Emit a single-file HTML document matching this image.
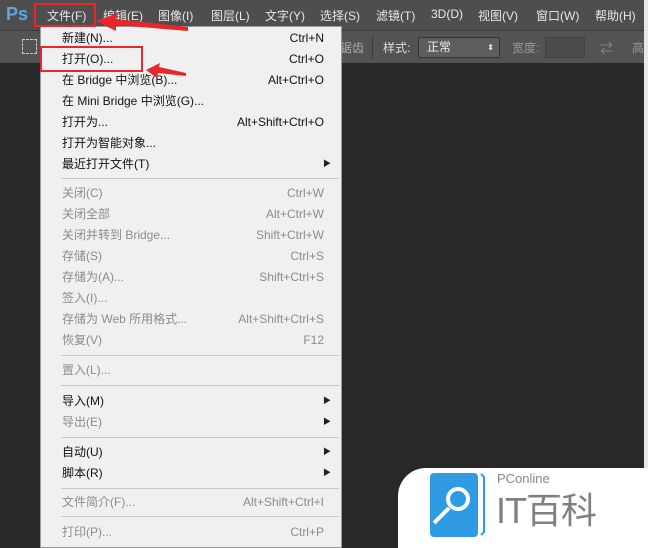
<!DOCTYPE html><html><head><meta charset="utf-8"><style>
body{margin:0;width:648px;height:541px;overflow:hidden;background:#282828;font-family:"Liberation Sans","Noto Sans CJK SC",sans-serif;position:relative}
.mb{position:absolute;left:0;top:0;width:648px;height:30px;background:#4e4e4e}
.mb span{position:absolute;top:7px;font-size:12px;color:#e8e8e8}
.tb{position:absolute;left:0;top:30px;width:648px;height:32px;background:#535353;border-top:1px solid #3a3a3a}
.menu{position:absolute;left:40px;top:26px;width:300px;height:520px;background:#f0f0f0;border:1px solid #999}
.it{position:absolute;left:21px;width:262px;font-size:12px;color:#111;height:21px;line-height:21px}
.it b{font-weight:normal;position:absolute;right:0;top:0}
.d{color:#8c8c8c}
.sep{position:absolute;left:20px;width:278px;height:1px;background:#c8c8c8}
.ar{position:absolute;right:10px;font-size:8px;color:#222}
.red{position:absolute;border:2px solid #e8262b}
</style></head><body>
<div class="mb">
<span style="left:6px;top:4px;font-size:18px;font-weight:bold;color:#5aa7e6">Ps</span>
<span style="left:47px">文件(F)</span><span style="left:103px">编辑(E)</span><span style="left:158px">图像(I)</span><span style="left:211px">图层(L)</span><span style="left:265px">文字(Y)</span><span style="left:320px">选择(S)</span><span style="left:376px">滤镜(T)</span><span style="left:431px">3D(D)</span><span style="left:478px">视图(V)</span><span style="left:536px">窗口(W)</span><span style="left:595px">帮助(H)</span>
</div>
<div class="tb">
<div style="position:absolute;left:22px;top:8px;width:13px;height:13px;border:1px dashed #ccc"></div>
<span style="position:absolute;left:340px;top:8px;font-size:12px;color:#aaa">锯齿</span>
<div style="position:absolute;left:372px;top:4px;width:1px;height:24px;background:#3e3e3e"></div>
<span style="position:absolute;left:383px;top:8px;font-size:12px;color:#ddd">样式:</span>
<div style="position:absolute;left:418px;top:6px;width:80px;height:19px;background:#5e5e5e;border:1px solid #333;border-radius:2px;color:#eee;font-size:12px;line-height:19px;text-indent:8px">正常<span style="position:absolute;right:5px;font-size:8px">⬍</span></div>
<span style="position:absolute;left:512px;top:8px;font-size:12px;color:#999">宽度:</span>
<div style="position:absolute;left:545px;top:6px;width:38px;height:19px;background:#4a4a4a;border:1px solid #444"></div>
<span style="position:absolute;left:600px;top:7px;font-size:13px;color:#888">⇄</span>
<span style="position:absolute;left:632px;top:8px;font-size:12px;color:#999">高</span>
</div>
<div style="position:absolute;left:644px;top:0;width:4px;height:541px;background:#e8e8e8"></div>
<div class="menu">
<div class="it" style="top:1px">新建(N)...<b>Ctrl+N</b></div>
<div class="it" style="top:22px">打开(O)...<b>Ctrl+O</b></div>
<div class="it" style="top:43px">在 Bridge 中浏览(B)...<b>Alt+Ctrl+O</b></div>
<div class="it" style="top:64px">在 Mini Bridge 中浏览(G)...</div>
<div class="it" style="top:85px">打开为...<b>Alt+Shift+Ctrl+O</b></div>
<div class="it" style="top:106px">打开为智能对象...</div>
<div class="it" style="top:127px">最近打开文件(T)</div><span class="ar" style="top:131px">▶</span>
<div class="sep" style="top:151px"></div>
<div class="it d" style="top:156px">关闭(C)<b>Ctrl+W</b></div>
<div class="it d" style="top:177px">关闭全部<b>Alt+Ctrl+W</b></div>
<div class="it d" style="top:198px">关闭并转到 Bridge...<b>Shift+Ctrl+W</b></div>
<div class="it d" style="top:219px">存储(S)<b>Ctrl+S</b></div>
<div class="it d" style="top:240px">存储为(A)...<b>Shift+Ctrl+S</b></div>
<div class="it d" style="top:261px">签入(I)...</div>
<div class="it d" style="top:282px">存储为 Web 所用格式...<b>Alt+Shift+Ctrl+S</b></div>
<div class="it d" style="top:303px">恢复(V)<b>F12</b></div>
<div class="sep" style="top:328px"></div>
<div class="it d" style="top:333px">置入(L)...</div>
<div class="sep" style="top:358px"></div>
<div class="it" style="top:364px">导入(M)</div><span class="ar" style="top:368px">▶</span>
<div class="it d" style="top:385px">导出(E)</div><span class="ar" style="top:389px">▶</span>
<div class="sep" style="top:410px"></div>
<div class="it" style="top:415px">自动(U)</div><span class="ar" style="top:419px">▶</span>
<div class="it" style="top:436px">脚本(R)</div><span class="ar" style="top:440px">▶</span>
<div class="sep" style="top:461px"></div>
<div class="it d" style="top:465px">文件简介(F)...<b>Alt+Shift+Ctrl+I</b></div>
<div class="sep" style="top:489px"></div>
<div class="it d" style="top:495px">打印(P)...<b>Ctrl+P</b></div>
</div>
<div class="red" style="left:34px;top:3px;width:58px;height:20px"></div>
<div class="red" style="left:40px;top:46px;width:99px;height:22px"></div>
<svg style="position:absolute;left:0;top:0" width="648" height="541">
<polygon points="96,21 118,13 116,19 188,27 188,31 116,25 116,31" fill="#e8262b"/>
<polygon points="146,70 160,63 159,67 186,73 186,76 158,73 157,78" fill="#e8262b"/>
</svg>
<div style="position:absolute;left:398px;top:468px;width:250px;height:80px;background:#fff;border-top-left-radius:28px"></div>
<svg style="position:absolute;left:428px;top:472px" width="60" height="66">
<rect x="2" y="1" width="48" height="64" rx="4" fill="#2f9be3"/>
<path d="M53 2 L56 5 L56 60 L53 63" stroke="#2f9be3" stroke-width="2" fill="none"/>
<circle cx="30" cy="27" r="12" fill="#fff"/><circle cx="30" cy="27" r="8" fill="#2f9be3"/>
<line x1="21" y1="36" x2="6" y2="51" stroke="#fff" stroke-width="4"/>
</svg>
<span style="position:absolute;left:497px;top:471px;font-size:13px;color:#888">PConline</span>
<span style="position:absolute;left:496px;top:488px;font-size:36px;line-height:46px;color:#808080;letter-spacing:-1px">IT百科</span>
</body></html>
